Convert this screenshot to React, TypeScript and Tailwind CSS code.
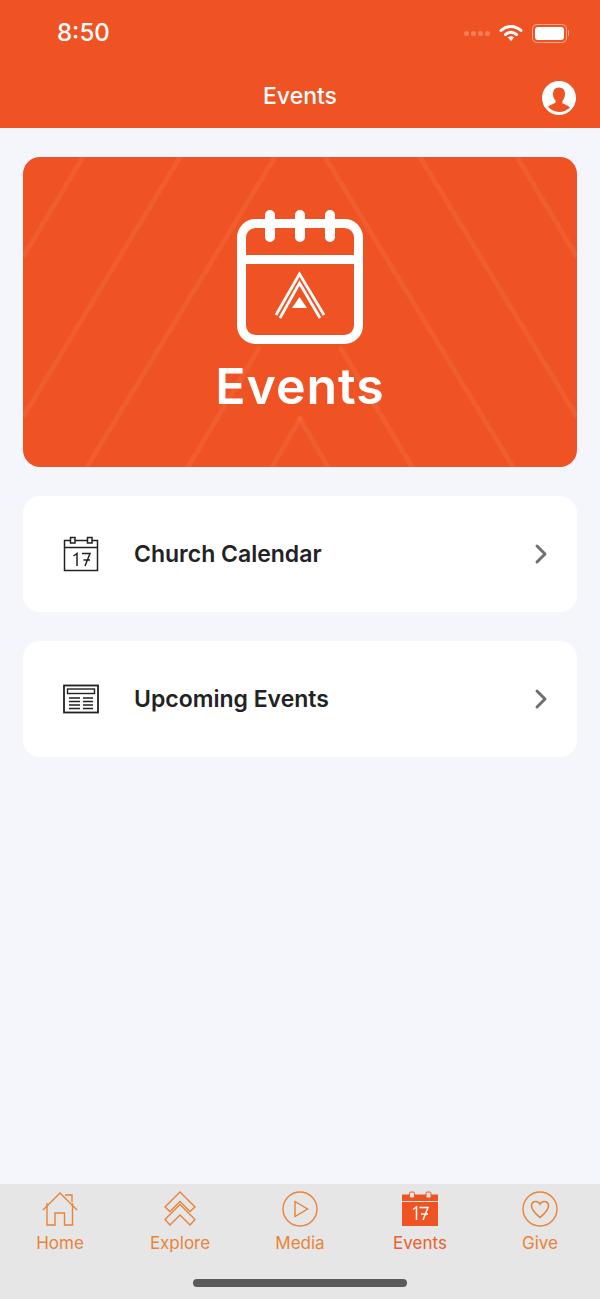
import { ChevronRight } from "lucide-react";

const ORANGE = "#f05323";

function WifiIcon() {
  return (
    <svg width="24" height="18" viewBox="0 0 24 18" fill="none" stroke="white" strokeWidth="3" strokeLinecap="round">
      <path d="M2 6.500C8 1 16 1 22 6.500" />
      <path d="M6.500 10.500C10 7.600 14 7.600 17.500 10.500" />
      <path d="M9.500 13.500L12 16.500L14.500 13.500C13 12.500 11 12.500 9.500 13.500Z" fill="white" strokeWidth="1" />
    </svg>
  );
}

function BatteryIcon() {
  return (
    <div className="flex items-center gap-[1px]">
      <div className="h-[19px] w-[35px] rounded-[5px] border border-white/50 p-[2px]">
        <div className="h-full w-full rounded-[3px] bg-white" />
      </div>
      <div className="h-[6px] w-[1px] rounded-r bg-white/50" />
    </div>
  );
}

function ProfileIcon() {
  return (
    <svg width="34" height="34" viewBox="0 0 34 34">
      <circle cx="17" cy="17" r="17" fill="white" />
      <path
        d="M17 6.500c-4 0-6 2.800-6 6.500 0 2.600 1 5 2.600 6.600v2c-1 1.200-5 2-7.600 4.200A14.600 14.600 0 0 0 17 31a14.600 14.600 0 0 0 11-4.700c-2.600-2.200-6.600-3-7.600-4.200v-2C22 18 23 15.600 23 13c0-3.700-2-6.500-6-6.500Z"
        fill={ORANGE}
      />
    </svg>
  );
}

function Stripes() {
  const lines = [
    [83, 157, 23, 257],
    [180, 157, 23, 417],
    [275, 157, 87, 467],
    [260, 347, 188, 467],
    [301, 417, 272, 467],
    [299, 417, 328, 467],
    [340, 347, 412, 467],
    [325, 157, 513, 467],
    [420, 157, 577, 417],
    [517, 157, 577, 257],
  ];
  return (
    <svg className="absolute inset-0 h-full w-full" viewBox="23 157 554 310">
      {lines.map(([x1, y1, x2, y2]) => (
        <line key={`${x1}-${y1}`} x1={x1} y1={y1} x2={x2} y2={y2} stroke="white" strokeOpacity="0.06" strokeWidth="5" />
      ))}
    </svg>
  );
}

function HeroCalendar() {
  return (
    <svg width="128" height="136" viewBox="0 0 128 136" fill="none" stroke="white">
      <rect x="5.500" y="13.500" width="117" height="116" rx="14" strokeWidth="9" />
      <path d="M5 49.500H123" strokeWidth="9" />
      <path d="M34 5V27M64 5V27M94 5V27" strokeWidth="10" strokeLinecap="round" />
      <path d="M40 105L63.500 64L88 105" strokeWidth="2.800" />
      <path d="M44 108L63.500 73L84 108" strokeWidth="2.800" />
      <path d="M56 98L63.500 87L71 98Z" fill="white" stroke="none" />
    </svg>
  );
}

function CalendarLine() {
  return (
    <svg width="36" height="36" viewBox="0 0 36 36" fill="none" stroke="#222" strokeWidth="1.500">
      <rect x="1.500" y="4.500" width="33" height="30" />
      <path d="M1.500 11.500H34.500" />
      <rect x="7.500" y="1.500" width="4.500" height="5.500" fill="white" />
      <rect x="24.500" y="1.500" width="4.500" height="5.500" fill="white" />
      <path d="M10.500 20L14 17.500V30" />
      <path d="M19 17.500H27L22 30M20.500 24H27" />
    </svg>
  );
}

function NewsLine() {
  return (
    <svg width="36" height="30" viewBox="0 0 36 30" fill="none" stroke="#222">
      <rect x="1" y="1.500" width="34" height="27" strokeWidth="1.800" />
      <rect x="4.500" y="5" width="27" height="4.500" strokeWidth="1.400" />
      <path d="M6 14H17M6 17.500H17M6 21H17M6 24.500H17M20 14H30M20 17.500H30M20 21H30M20 24.500H30" strokeWidth="1.700" />
    </svg>
  );
}

function HomeTab() {
  return (
    <svg width="36" height="36" viewBox="0 0 36 36" fill="none" stroke="#e8833a" strokeWidth="1.400">
      <path d="M1 19L18 2L35 19" />
      <path d="M23 4H30V11" />
      <path d="M5 12V34H13V22H22.500V34H30.500V12" />
    </svg>
  );
}

function ExploreTab() {
  return (
    <svg width="36" height="36" viewBox="0 0 36 36" fill="none" stroke="#e8833a" strokeWidth="1.400">
      <path d="M18 1L33 16L28 20.500L18 10.500L8 20.500L3 16Z" />
      <path d="M18 13.500L33 28.500L28 34L18 24L8 34L3 28.500Z" />
    </svg>
  );
}

function MediaTab() {
  return (
    <svg width="36" height="36" viewBox="0 0 36 36" fill="none" stroke="#e8833a" strokeWidth="1.400">
      <circle cx="18" cy="18" r="17" />
      <path d="M13 10.500L25.500 18L13 25.500Z" />
    </svg>
  );
}

function EventsTab() {
  return (
    <svg width="36" height="36" viewBox="0 0 36 36">
      <path d="M0 3.500H36V35H0Z" fill={ORANGE} />
      <path d="M0 10.500H36" stroke="#e6e6e6" strokeWidth="1.200" />
      <rect x="7.500" y="1" width="5" height="6" rx="1.500" fill="#e6e6e6" stroke={ORANGE} />
      <rect x="24" y="1" width="5" height="6" rx="1.500" fill="#e6e6e6" stroke={ORANGE} />
      <path d="M11 18.500L14.500 16V29M17.500 16.500H26L21 29M19 23H26" fill="none" stroke="white" strokeWidth="1.500" />
    </svg>
  );
}

function GiveTab() {
  return (
    <svg width="36" height="36" viewBox="0 0 36 36" fill="none" stroke="#e8833a" strokeWidth="1.400">
      <circle cx="18" cy="18" r="17" />
      <path d="M18 26.500C14 23 9.500 19.500 9.500 15C9.500 12 11.500 10.500 13.700 10.500C15.500 10.500 17 11.500 18 13.200C19 11.500 20.500 10.500 22.300 10.500C24.500 10.500 26.500 12 26.500 15C26.500 19.500 22 23 18 26.500Z" strokeWidth="1.600" />
    </svg>
  );
}

const TABS = [
  { label: "Home", icon: <HomeTab />, active: false },
  { label: "Explore", icon: <ExploreTab />, active: false },
  { label: "Media", icon: <MediaTab />, active: false },
  { label: "Events", icon: <EventsTab />, active: true },
  { label: "Give", icon: <GiveTab />, active: false },
];

const ROWS = [
  { label: "Church Calendar", icon: <CalendarLine /> },
  { label: "Upcoming Events", icon: <NewsLine /> },
];

export default function App() {
  return (
    <div className="flex h-[1299px] w-[600px] flex-col overflow-hidden bg-[#f4f6fb] font-['Inter',sans-serif]">
      <header className="h-[128px] shrink-0 bg-[#f05323] text-white">
        <div className="flex h-[66px] items-center justify-between pl-[57px] pr-[31px]">
          <span className="text-[24px] font-medium">8:50</span>
          <div className="flex items-center gap-[9px]">
            <div className="flex gap-[2px]">
              {[0, 1, 2, 3].map((i) => (
                <span key={i} className="h-[5px] w-[5px] rounded-full bg-white/25" />
              ))}
            </div>
            <WifiIcon />
            <BatteryIcon />
          </div>
        </div>
        <div className="relative flex h-[60px] items-center justify-center">
          <span className="text-[23px] font-medium">Events</span>
          <div className="absolute right-[24px] top-[15px]">
            <ProfileIcon />
          </div>
        </div>
      </header>

      <main className="flex flex-1 flex-col gap-[29px] px-[23px] pt-[29px]">
        <section className="relative flex h-[310px] flex-col items-center overflow-hidden rounded-[17px] bg-[#f05323] pt-[53px]">
          <Stripes />
          <div className="relative">
            <HeroCalendar />
          </div>
          <h1 className="relative mt-[11px] text-[50px] font-semibold leading-[58px] tracking-[1px] text-white">Events</h1>
        </section>

        {ROWS.map((row) => (
          <div key={row.label} className="flex h-[116px] items-center rounded-[17px] bg-white pl-[40px] pr-[20px]">
            <div className="flex w-[36px] justify-center">{row.icon}</div>
            <span className="ml-[35px] flex-1 text-[23px] font-semibold text-[#222222]">{row.label}</span>
            <ChevronRight size={32} strokeWidth={2.200} className="text-[#6e6e73]" />
          </div>
        ))}
      </main>

      <nav className="h-[115px] shrink-0 bg-[#e6e6e6]">
        <div className="grid grid-cols-5 pt-[7px]">
          {TABS.map((tab) => (
            <div key={tab.label} className="flex flex-col items-center">
              <div className="h-[36px]">{tab.icon}</div>
              <span className={`mt-[5px] text-[17px] leading-[22px] ${tab.active ? "text-[#e8602c]" : "text-[#e8833a]"}`}>
                {tab.label}
              </span>
            </div>
          ))}
        </div>
        <div className="mx-auto mt-[25px] h-[8px] w-[214px] rounded-full bg-[#5a5a5a]" />
      </nav>
    </div>
  );
}
